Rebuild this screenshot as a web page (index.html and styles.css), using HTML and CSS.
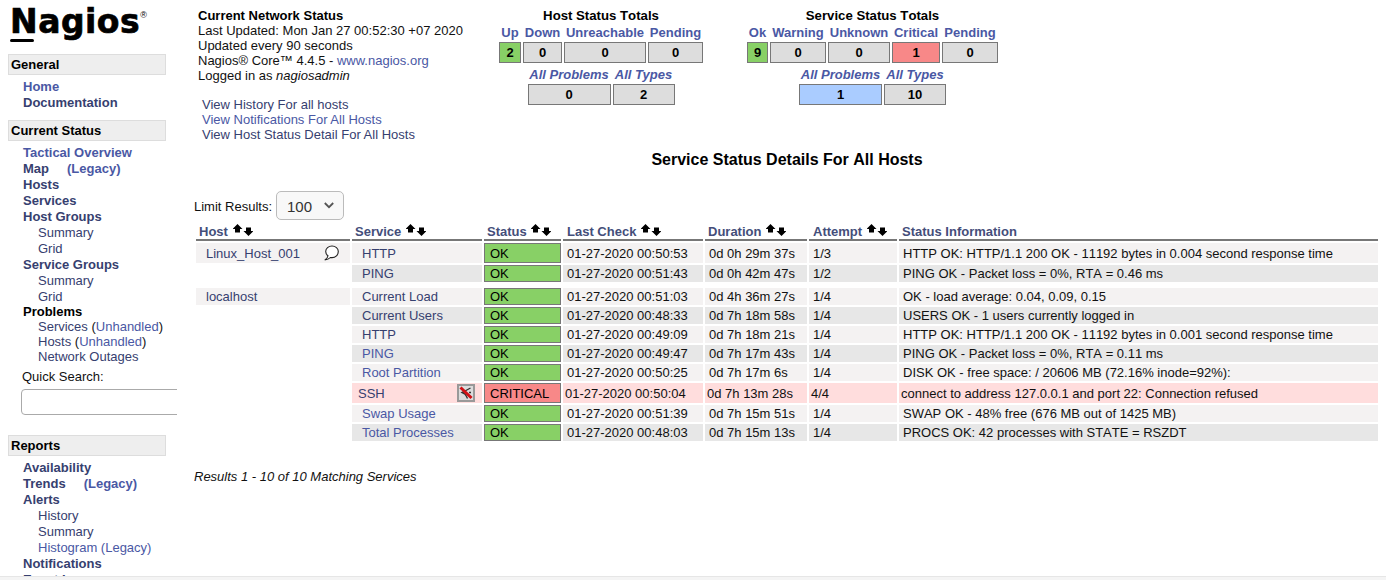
FILE: index.html
```html
<!DOCTYPE html>
<html lang="en">

<head>
    <meta charset="UTF-8">
    <meta name="viewport" content="width=device-width, initial-scale=1.0">
    <title>Nagios Core</title>
    <link rel="stylesheet" href="styles.css">
</head>

<body>
    <svg class="defs" width="0" height="0">
        <symbol id="sort" viewBox="0 0 20 12">
            <path d="M4.500 0 9.500 5H7V8.500H2V5H-.5z"/>
            <path d="M13 3.500h5V7h2.500L15.500 12 10.500 7H13z"/>
        </symbol>
    </svg>
    <div class="page">
        <nav class="side">
            <div class="logo"><span class="logo-n">N</span>agios<sup>®</sup></div>

            <div class="nav-head">General</div>
            <div class="nav-list">
                <a class="lvl1" href="#">Home</a>
                <a class="lvl1 dark" href="#">Documentation</a>
            </div>

            <div class="nav-head">Current Status</div>
            <div class="nav-list">
                <a class="lvl1" href="#">Tactical Overview</a>
                <span class="lvl1"><a class="dark" href="#">Map</a><a class="legacy" href="#">(Legacy)</a></span>
                <a class="lvl1 dark" href="#">Hosts</a>
                <a class="lvl1 dark" href="#">Services</a>
                <a class="lvl1 dark" href="#">Host Groups</a>
                <a class="lvl2 dark" href="#">Summary</a>
                <a class="lvl2 dark" href="#">Grid</a>
                <a class="lvl1 dark" href="#">Service Groups</a>
                <a class="lvl2 dark" href="#">Summary</a>
                <a class="lvl2 dark" href="#">Grid</a>
                <a class="lvl1 black tight first-tight" href="#">Problems</a>
                <span class="lvl2 tight"><a class="dark" href="#">Services</a> (<a href="#">Unhandled</a>)</span>
                <span class="lvl2 tight"><a class="dark" href="#">Hosts</a> (<a href="#">Unhandled</a>)</span>
                <a class="lvl2 dark tight" href="#">Network Outages</a>
            </div>
            <div class="quick">
                <label for="q">Quick Search:</label>
                <input id="q" type="text">
            </div>

            <div class="nav-head">Reports</div>
            <div class="nav-list">
                <a class="lvl1 dark" href="#">Availability</a>
                <span class="lvl1"><a class="dark" href="#">Trends</a><a class="legacy" href="#">(Legacy)</a></span>
                <a class="lvl1 dark" href="#">Alerts</a>
                <a class="lvl2 dark" href="#">History</a>
                <a class="lvl2 dark" href="#">Summary</a>
                <a class="lvl2" href="#">Histogram (Legacy)</a>
                <a class="lvl1 dark" href="#">Notifications</a>
                <a class="lvl1 dark" href="#">Event Log</a>
            </div>
        </nav>

        <main class="main">
            <div class="top">
                <div class="info">
                    <b>Current Network Status</b>
                    <div>Last Updated: Mon Jan 27 00:52:30 +07 2020</div>
                    <div>Updated every 90 seconds</div>
                    <div>Nagios® Core™ 4.4.5 - <a href="#">www.nagios.org</a></div>
                    <div>Logged in as <i>nagiosadmin</i></div>
                    <div class="links">
                        <a class="dark" href="#">View History For all hosts</a>
                        <a href="#">View Notifications For All Hosts</a>
                        <a class="dark" href="#">View Host Status Detail For All Hosts</a>
                    </div>
                </div>

                <div class="totals host-totals">
                    <b class="totals-title">Host Status Totals</b>
                    <div class="t-row">
                        <div class="t-col w-up"><a href="#">Up</a><span class="box green">2</span></div>
                        <div class="t-col w-down"><a href="#">Down</a><span class="box">0</span></div>
                        <div class="t-col w-unreach"><a href="#">Unreachable</a><span class="box">0</span></div>
                        <div class="t-col w-pend"><a href="#">Pending</a><span class="box">0</span></div>
                    </div>
                    <div class="t-row">
                        <div class="t-col w-prob"><a class="em" href="#">All Problems</a><span class="box">0</span></div>
                        <div class="t-col w-types"><a class="em" href="#">All Types</a><span class="box">2</span></div>
                    </div>
                </div>

                <div class="totals svc-totals">
                    <b class="totals-title">Service Status Totals</b>
                    <div class="t-row">
                        <div class="t-col w-ok"><a href="#">Ok</a><span class="box green">9</span></div>
                        <div class="t-col w-warn"><a href="#">Warning</a><span class="box">0</span></div>
                        <div class="t-col w-unk"><a href="#">Unknown</a><span class="box">0</span></div>
                        <div class="t-col w-crit"><a href="#">Critical</a><span class="box red">1</span></div>
                        <div class="t-col w-pend2"><a href="#">Pending</a><span class="box">0</span></div>
                    </div>
                    <div class="t-row">
                        <div class="t-col w-prob"><a class="em" href="#">All Problems</a><span class="box blue">1</span></div>
                        <div class="t-col w-types"><a class="em" href="#">All Types</a><span class="box">10</span></div>
                    </div>
                </div>
            </div>

            <h1 class="title">Service Status Details For All Hosts</h1>

            <div class="limit">
                <label for="lim">Limit Results:</label>
                <span class="select" id="lim">100
                    <svg width="10" height="7" viewBox="0 0 10 7"><path d="M.8 1 5 5.200 9.200 1" fill="none" stroke="#555" stroke-width="1.800"/></svg>
                </span>
            </div>

            <table class="status">
                <colgroup>
                    <col class="c-host"><col class="c-svc"><col class="c-state"><col class="c-check"><col class="c-dur"><col class="c-att"><col class="c-info">
                </colgroup>
                <thead>
                    <tr>
                        <th>Host <svg class="sort"><use href="#sort"/></svg></th>
                        <th>Service <svg class="sort"><use href="#sort"/></svg></th>
                        <th>Status <svg class="sort"><use href="#sort"/></svg></th>
                        <th class="wide">Last Check <svg class="sort"><use href="#sort"/></svg></th>
                        <th>Duration <svg class="sort"><use href="#sort"/></svg></th>
                        <th class="wide">Attempt <svg class="sort"><use href="#sort"/></svg></th>
                        <th>Status Information</th>
                    </tr>
                </thead>
                <tbody>
                    <tr class="odd tall">
                        <td class="host"><div class="cell-flex"><a class="dark" href="#">Linux_Host_001</a>
                            <svg width="15" height="16" viewBox="0 0 15 16"><path d="M8 1C4.500 1 1.700 3.400 1.700 6.500c0 1.800.9 3.300 2.300 4.300C3.800 12.500 2.500 14 .8 15c2.500-.2 4.400-1.200 5.600-2.500.5.1 1 .1 1.600.1 3.500 0 6.300-2.700 6.300-6S11.500 1 8 1z" fill="#fff" stroke="#222" stroke-width="1.100"/></svg>
                        </div></td>
                        <td class="svc"><a class="dark" href="#">HTTP</a></td>
                        <td class="state ok">OK</td>
                        <td>01-27-2020 00:50:53</td><td>0d 0h 29m 37s</td><td>1/3</td><td>HTTP OK: HTTP/1.1 200 OK - 11192 bytes in 0.004 second response time</td>
                    </tr>
                    <tr class="even">
                        <td class="blank"></td>
                        <td class="svc"><a class="dark" href="#">PING</a></td>
                        <td class="state ok">OK</td>
                        <td>01-27-2020 00:51:43</td><td>0d 0h 42m 47s</td><td>1/2</td><td>PING OK - Packet loss = 0%, RTA = 0.46 ms</td>
                    </tr>
                    <tr class="spacer"><td colspan="7"></td></tr>
                    <tr class="odd">
                        <td class="host"><a class="dark" href="#">localhost</a></td>
                        <td class="svc"><a class="dark" href="#">Current Load</a></td>
                        <td class="state ok">OK</td>
                        <td>01-27-2020 00:51:03</td><td>0d 4h 36m 27s</td><td>1/4</td><td>OK - load average: 0.04, 0.09, 0.15</td>
                    </tr>
                    <tr class="even">
                        <td class="blank"></td>
                        <td class="svc"><a class="dark" href="#">Current Users</a></td>
                        <td class="state ok">OK</td>
                        <td>01-27-2020 00:48:33</td><td>0d 7h 18m 58s</td><td>1/4</td><td>USERS OK - 1 users currently logged in</td>
                    </tr>
                    <tr class="odd">
                        <td class="blank"></td>
                        <td class="svc"><a class="dark" href="#">HTTP</a></td>
                        <td class="state ok">OK</td>
                        <td>01-27-2020 00:49:09</td><td>0d 7h 18m 21s</td><td>1/4</td><td>HTTP OK: HTTP/1.1 200 OK - 11192 bytes in 0.001 second response time</td>
                    </tr>
                    <tr class="even">
                        <td class="blank"></td>
                        <td class="svc"><a href="#">PING</a></td>
                        <td class="state ok">OK</td>
                        <td>01-27-2020 00:49:47</td><td>0d 7h 17m 43s</td><td>1/4</td><td>PING OK - Packet loss = 0%, RTA = 0.11 ms</td>
                    </tr>
                    <tr class="odd">
                        <td class="blank"></td>
                        <td class="svc"><a href="#">Root Partition</a></td>
                        <td class="state ok">OK</td>
                        <td>01-27-2020 00:50:25</td><td>0d 7h 17m 6s</td><td>1/4</td><td>DISK OK - free space: / 20606 MB (72.16% inode=92%):</td>
                    </tr>
                    <tr class="crit tall">
                        <td class="blank"></td>
                        <td class="svc"><div class="cell-flex"><a class="dark" href="#">SSH</a>
                            <svg width="18" height="18" viewBox="0 0 18 18"><rect x="1" y="1" width="16" height="16" fill="#dcdcdc" stroke="#999" stroke-width="2"/><path d="M13.500 4 8 7 5 8.500 8 10l1 1.500 1.500 3M14 8.500h-2M12.500 12l1.500 1.500" fill="none" stroke="#333" stroke-width="1.400"/><path d="M3.500 3.500 14.500 14" stroke="#d01015" stroke-width="3"/></svg>
                        </div></td>
                        <td class="state bad">CRITICAL</td>
                        <td>01-27-2020 00:50:04</td><td>0d 7h 13m 28s</td><td>4/4</td><td>connect to address 127.0.0.1 and port 22: Connection refused</td>
                    </tr>
                    <tr class="odd">
                        <td class="blank"></td>
                        <td class="svc"><a href="#">Swap Usage</a></td>
                        <td class="state ok">OK</td>
                        <td>01-27-2020 00:51:39</td><td>0d 7h 15m 51s</td><td>1/4</td><td>SWAP OK - 48% free (676 MB out of 1425 MB)</td>
                    </tr>
                    <tr class="even">
                        <td class="blank"></td>
                        <td class="svc"><a href="#">Total Processes</a></td>
                        <td class="state ok">OK</td>
                        <td>01-27-2020 00:48:03</td><td>0d 7h 15m 13s</td><td>1/4</td><td>PROCS OK: 42 processes with STATE = RSZDT</td>
                    </tr>
                </tbody>
            </table>

            <p class="results">Results 1 - 10 of 10 Matching Services</p>
        </main>
    </div>
    <div class="scrollbar"></div>
</body>

</html>
```

FILE: styles.css
```css
html, body {
    margin: 0;
    height: 100%;
    overflow: hidden;
}

body {
    font-family: "Liberation Sans", Arial, sans-serif;
    font-size: 13px;
    line-height: 15px;
    color: #111;
    background: #fff;
}

a {
    color: #4a58a4;
    text-decoration: none;
    font-kerning: normal;
}

.defs {
    display: block;
    height: 0;
}

.page {
    display: flex;
    height: 576px;
    overflow: hidden;
}

.scrollbar {
    height: 4px;
    border-top: 1px solid #e6e6e6;
    background: #f4f4f4;
    box-sizing: border-box;
}

/* side nav */
.side {
    width: 177px;
    flex: none;
    overflow: hidden;
}

.logo {
    height: 54px;
    padding-left: 10px;
    font-family: "DejaVu Sans", sans-serif;
    font-size: 33px;
    font-weight: bold;
    line-height: 44px;
    color: #000;
    letter-spacing: .5px;
    -webkit-text-stroke: .7px #000;
    box-sizing: border-box;
}

.logo-n {
    position: relative;
}

.logo-n::after {
    content: "";
    position: absolute;
    left: 0;
    width: 24px;
    top: 37px;
    height: 3px;
    border-radius: 2px;
    background: #000;
}

.logo sup {
    font-family: "Liberation Sans", sans-serif;
    font-size: 9px;
    font-weight: normal;
    letter-spacing: 0;
    -webkit-text-stroke: 0;
    line-height: 0;
    vertical-align: 15px;
}

.nav-head {
    width: 158px;
    height: 21px;
    margin-left: 8px;
    padding-left: 2px;
    border: 1px solid #ddd;
    background: #eee;
    box-sizing: border-box;
    font-weight: bold;
    line-height: 19px;
    color: #000;
}

.nav-list {
    display: flex;
    flex-direction: column;
    padding: 4px 0 9px;
    line-height: 16px;
}

.nav-list a, .nav-list span {
    display: block;
    white-space: nowrap;
}

.nav-list span a {
    display: inline;
}

.lvl1 {
    margin-left: 23px;
    font-weight: bold;
}

.lvl2 {
    margin-left: 38px;
    font-weight: normal;
}

.tight {
    line-height: 15px;
}

.first-tight {
    margin-top: -1px;
}

.dark {
    color: #36406f;
}

.black {
    color: #000;
}

.legacy {
    margin-left: 18px;
}

.quick {
    margin: -4px 0 20px 22px;
}

.quick label {
    display: block;
    line-height: 16px;
}

.quick input {
    display: block;
    width: 190px;
    height: 26px;
    margin: 4px 0 0 -1px;
    padding: 0;
    border: 1px solid #aaa;
    border-radius: 4px;
    box-sizing: border-box;
    background: #fff;
}

/* main frame */
.main {
    flex: 1;
    min-width: 0;
    padding: 8px 8px 0 17px;
}

.top {
    display: flex;
    height: 143px;
}

.info {
    width: 300px;
    margin-left: 4px;
    flex: none;
}

.info b {
    color: #000;
}

.links {
    display: flex;
    flex-direction: column;
    margin: 14px 0 0 4px;
}

.totals {
    display: flex;
    flex-direction: column;
    align-items: center;
    flex: none;
}

.host-totals {
    width: 206px;
}

.svc-totals {
    width: 253px;
    margin-left: 42px;
}

.totals-title {
    color: #000;
    font-size: 13.200px;
    font-kerning: none;
}

.t-row {
    display: flex;
    gap: 2px;
    margin: 2px 0;
}

.t-col {
    display: flex;
    flex-direction: column;
    align-items: center;
    font-weight: bold;
}

.t-col a {
    white-space: nowrap;
}

.em {
    font-style: italic;
}

.box {
    display: block;
    width: 100%;
    height: 21px;
    margin-top: 2px;
    border: 1px solid #777;
    background: #ddd;
    box-sizing: border-box;
    text-align: center;
    line-height: 19px;
    color: #000;
}

.green { background: #88d066; }
.red { background: #f88888; }
.blue { background: #aaccff; }

.w-up { width: 22px; }
.w-down { width: 39px; }
.w-unreach { width: 82px; }
.w-pend { width: 55px; }
.w-prob { width: 83px; }
.w-types { width: 62px; }
.w-ok { width: 21px; }
.w-warn { width: 56px; }
.w-unk { width: 62px; }
.w-crit { width: 48px; }
.w-pend2 { width: 56px; }

.title {
    margin: 0;
    padding-left: 2px;
    font-size: 16px;
    font-kerning: none;
    line-height: 18px;
    text-align: center;
    color: #000;
}

.limit {
    display: flex;
    align-items: center;
    gap: 4px;
    margin-top: 22px;
    height: 29px;
}

.limit label {
    margin-top: 2px;
}

.select {
    display: flex;
    align-items: center;
    justify-content: space-between;
    width: 68px;
    height: 29px;
    padding: 1px 9px 0 10px;
    border: 1px solid #bbb;
    border-radius: 5px;
    box-sizing: border-box;
    background: #f8f8f8;
    font-size: 15px;
    color: #333;
}

.select svg {
    margin-top: -2px;
}

/* service table */
.status {
    width: 1186px;
    margin: 2px 0 0 0;
    border-collapse: separate;
    border-spacing: 2px;
    table-layout: fixed;
}

.c-host { width: 154px; }
.c-svc { width: 130px; }
.c-state { width: 77px; }
.c-check { width: 140px; }
.c-dur { width: 102px; }
.c-att { width: 88px; }

.status th {
    padding: 0 0 0 3px;
    height: 15px;
    border-bottom: 2px solid #777;
    text-align: left;
    font-weight: bold;
    color: #444e7a;
    white-space: nowrap;
}

.status th.wide {
    padding-left: 4px;
}

.sort {
    width: 20px;
    height: 12px;
    margin-left: 1px;
    vertical-align: top;
    fill: #000;
    overflow: visible;
}

.status td {
    height: 17px;
    padding: 0 0 0 4px;
    font-kerning: none;
    white-space: nowrap;
    overflow: hidden;
}

.odd td { background: #f4f2f2; }
.even td { background: #e7e7e7; }
.crit td { background: #ffdddd; padding-left: 2px; }
.status td.blank { background: transparent; }

.status .tall td, .tall td { height: 20px; }

.status .spacer td {
    height: 2px;
    padding: 0;
    background: transparent;
}

.status td.host {
    padding-left: 10px;
    padding-right: 11px;
}

.status td.svc {
    padding-left: 10px;
}

.status .crit td.svc {
    padding-left: 6px;
    padding-right: 7px;
}

.cell-flex {
    display: flex;
    align-items: center;
    justify-content: space-between;
}

.status td.state {
    padding-left: 5px;
    border: 1px solid #777;
    box-sizing: border-box;
    color: #000;
}

.status td.ok { background: #88d066; }
.status td.bad { background: #f88888; }

.results {
    margin: 26px 0 0 0;
    font-style: italic;
}
```
